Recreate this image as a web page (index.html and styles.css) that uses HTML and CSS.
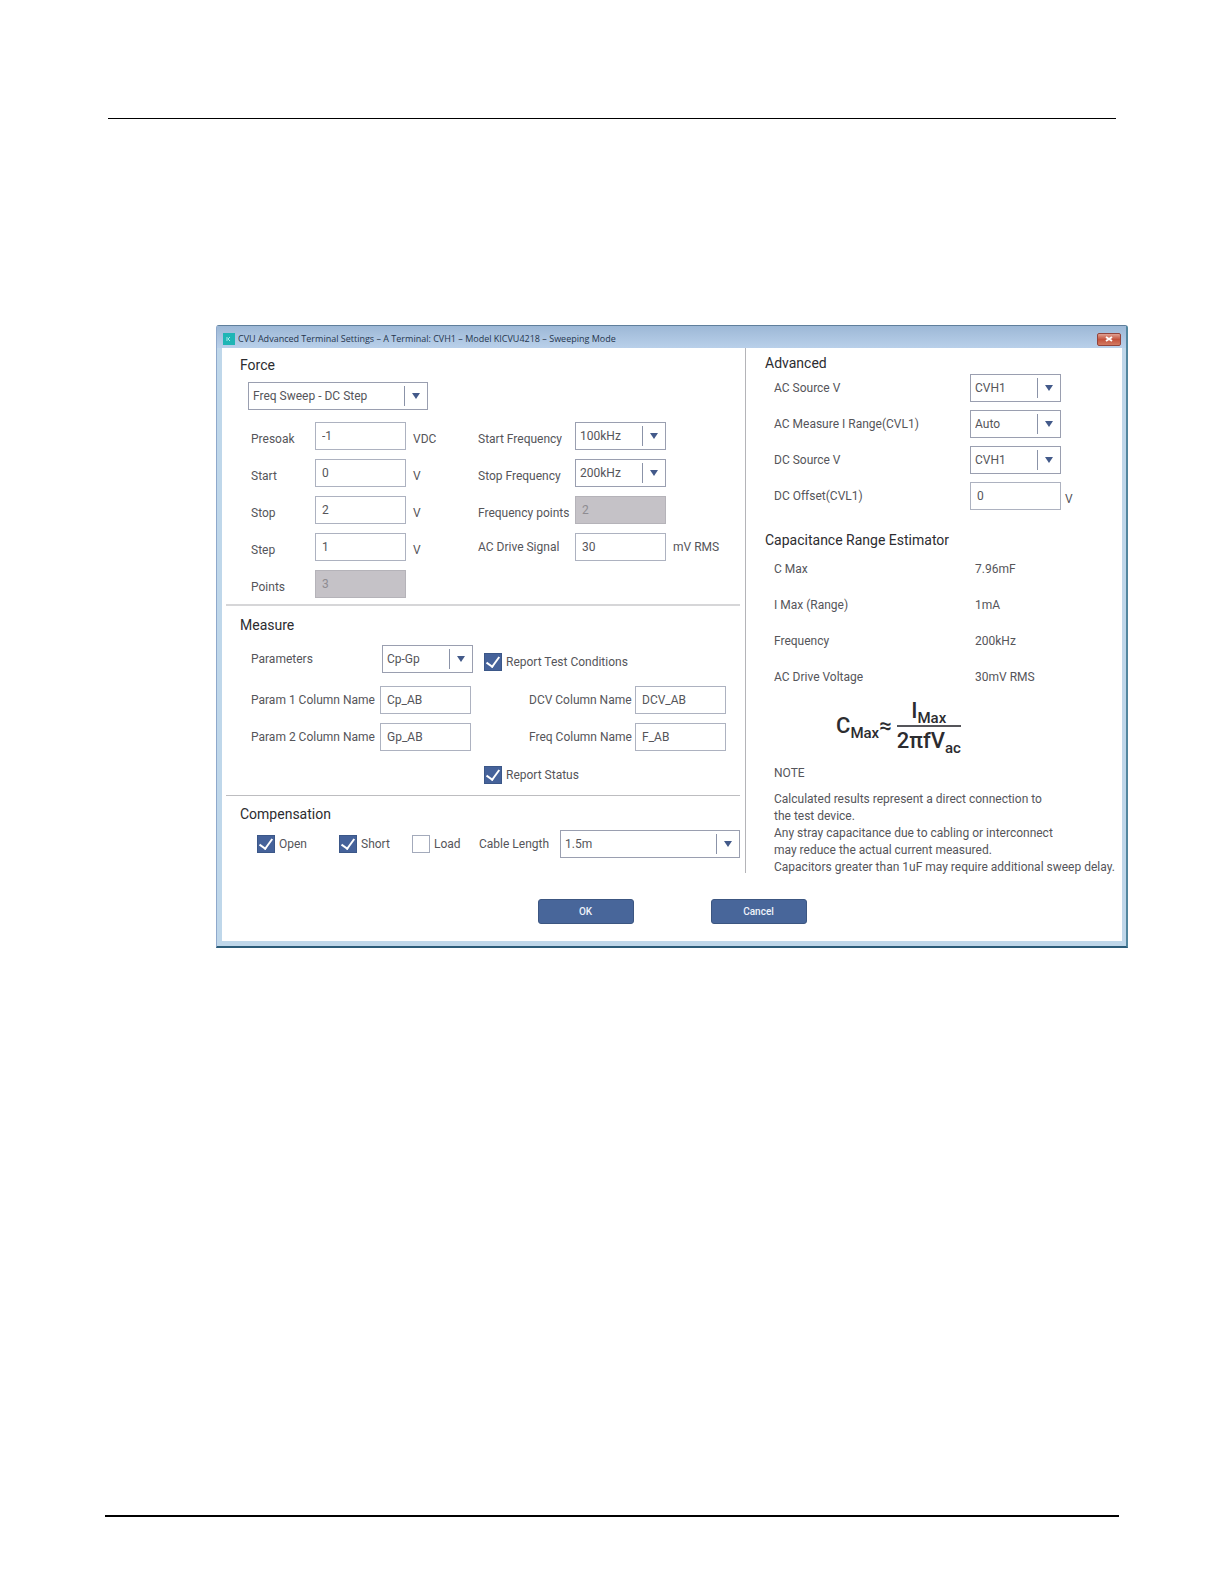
FILE: index.html
```html
<!DOCTYPE html>
<html lang="en">
<head>
<meta charset="utf-8">
<title>CVU Advanced Terminal Settings</title>
<link rel="stylesheet" href="styles.css">
</head>
<body>
<div class="page">
  <hr class="rule rule-top">
  <form class="dialog">
    <header class="titlebar">
      <svg class="app-icon" viewBox="0 0 12 12" aria-hidden="true"><rect width="12" height="12" fill="#1fb5b5"/><path d="M4 4v4M7 4L5 6l2 2" stroke="#a5ecea" fill="none"/></svg>
      <h1 class="title">CVU Advanced Terminal Settings – A Terminal: CVH1 – Model KICVU4218 – Sweeping Mode</h1>
      <button type="button" class="close" aria-label="Close"><svg viewBox="0 0 8 6" aria-hidden="true"><path d="M1 1l6 4M7 1L1 5" stroke="#fff" stroke-width="2"/></svg></button>
    </header>
    <div class="body">
      <div class="left">
        <section class="force">
          <h2>Force</h2>
          <span class="select wide"><select aria-label="Force mode"><option>Freq Sweep - DC Step</option></select></span>
          <div class="force-grid">
            <label for="presoak">Presoak</label><input id="presoak" value="-1"><span class="unit">VDC</span>
            <label for="f1">Start Frequency</label><span class="select"><select id="f1"><option>100kHz</option></select></span><span></span>
            <label for="start">Start</label><input id="start" value="0"><span class="unit">V</span>
            <label for="f2">Stop Frequency</label><span class="select"><select id="f2"><option>200kHz</option></select></span><span></span>
            <label for="stop">Stop</label><input id="stop" value="2"><span class="unit">V</span>
            <label for="fp">Frequency points</label><input id="fp" value="2" disabled><span></span>
            <label for="step">Step</label><input id="step" value="1"><span class="unit">V</span>
            <label class="level" for="ac">AC Drive Signal</label><input id="ac" value="30"><span class="unit level">mV RMS</span>
            <label for="points">Points</label><input id="points" value="3" disabled>
          </div>
        </section>
        <section class="measure">
          <h2>Measure</h2>
          <div class="measure-grid params">
            <label for="params">Parameters</label><span class="select"><select id="params"><option>Cp-Gp</option></select></span>
            <label class="check report"><input type="checkbox" checked>Report Test Conditions</label>
          </div>
          <div class="measure-grid names">
            <label for="p1">Param 1 Column Name</label><input id="p1" value="Cp_AB">
            <label class="second" for="dcv">DCV Column Name</label><input id="dcv" value="DCV_AB">
            <label for="p2">Param 2 Column Name</label><input id="p2" value="Gp_AB">
            <label class="second" for="freq">Freq Column Name</label><input id="freq" value="F_AB">
          </div>
          <div class="measure-grid status">
            <label class="check report"><input type="checkbox" checked>Report Status</label>
          </div>
        </section>
        <section class="compensation">
          <h2>Compensation</h2>
          <div class="comp-grid">
            <label class="check"><input type="checkbox" checked>Open</label>
            <label class="check"><input type="checkbox" checked>Short</label>
            <label class="check"><input type="checkbox">Load</label>
            <label for="cable">Cable Length</label>
            <span class="select"><select id="cable"><option>1.5m</option></select></span>
          </div>
        </section>
      </div>
      <div class="right">
        <section>
          <h2>Advanced</h2>
          <div class="adv-grid">
            <label for="acs">AC Source V</label><span class="select"><select id="acs"><option>CVH1</option></select></span><span></span>
            <label for="acm">AC Measure I Range(CVL1)</label><span class="select"><select id="acm"><option>Auto</option></select></span><span></span>
            <label for="dcs">DC Source V</label><span class="select"><select id="dcs"><option>CVH1</option></select></span><span></span>
            <label for="dco">DC Offset(CVL1)</label><input id="dco" value="0"><span class="unit">V</span>
          </div>
        </section>
        <section class="estimator">
          <h2>Capacitance Range Estimator</h2>
          <dl>
            <dt>C Max</dt><dd>7.96mF</dd>
            <dt>I Max (Range)</dt><dd>1mA</dd>
            <dt>Frequency</dt><dd>200kHz</dd>
            <dt>AC Drive Voltage</dt><dd>30mV RMS</dd>
          </dl>
          <div class="formula">
            <span>C<sub>Max</sub>≈</span>
            <span class="fraction"><span class="num">I<sub>Max</sub></span><span class="den">2πfV<sub>ac</sub></span></span>
          </div>
          <h3>NOTE</h3>
          <p>Calculated results represent a direct connection to<br>the test device.<br>Any stray capacitance due to cabling or interconnect<br>may reduce the actual current measured.<br>Capacitors greater than 1uF may require additional sweep delay.</p>
        </section>
      </div>
    </div>
    <footer class="actions">
      <button type="button">OK</button>
      <button type="button">Cancel</button>
    </footer>
  </form>
  <hr class="rule rule-bottom">
</div>
</body>
</html>
```
FILE: styles.css
```css
* { box-sizing: border-box; }

body {
  margin: 0;
  background: #fff;
  color: #55555a;
  font: 12px/18px Roboto, "Liberation Sans", sans-serif;
}

.page {
  display: flex;
  flex-direction: column;
  min-height: 100vh;
  padding: 118px 96px 67px 105px;
}

.rule { width: auto; margin: 0; border: 0; background: #000; }
.rule-top { height: 1px; margin: 0 12px 206px 3px; }
.rule-bottom { height: 2px; margin: auto 9px 0 0; }

.dialog {
  margin-left: 111px;
  border: solid #52869f;
  border-width: 1px 2px 2px 1px;
  border-top-color: #5f7f9c;
  border-left-color: #8fa9cc;
  border-bottom-color: #2b5b78;
  border-radius: 3px 3px 0 0;
  background: #bfd7ea;
  padding: 0 4px 5px 5px;
}

.titlebar {
  display: flex;
  align-items: center;
  gap: 3px;
  height: 22px;
  margin: 0 -4px 0 -5px;
  padding: 4px 5px 0 6px;
  background: linear-gradient(#9db8d6, #b9d0ea);
}
.app-icon { width: 12px; height: 12px; }
.title {
  flex: 1;
  margin: 0;
  color: #26364e;
  font: 9px/14px "Open Sans", "Noto Sans", sans-serif;
}
.close {
  display: flex;
  align-items: center;
  justify-content: center;
  width: 24px;
  height: 13px;
  padding: 0;
  border: 1px solid #93443c;
  border-radius: 2px;
  background: linear-gradient(#e0a192, #c4523c 50%, #d27a62);
}
.close svg { width: 8px; height: 6px; }

.body {
  display: grid;
  grid-template-columns: minmax(0, 524fr) minmax(0, 376fr);
  align-items: start;
  background: #fff;
}

.left {
  min-height: 525px;
  padding: 8px 5px 0 4px;
  border-right: 1px solid #b4b4b8;
}

h2 {
  margin: 0;
  color: #2c2c30;
  font-size: 14px;
  font-weight: 400;
  line-height: 18px;
}
.left h2 { padding-left: 14px; }

.force { padding-bottom: 6px; border-bottom: 2px solid #d6d6d8; }
.measure { padding: 10px 0 11px; border-bottom: 1px solid #bdbdc0; }
.compensation { padding-top: 9px; }

input:not([type="checkbox"]), select {
  width: 100%;
  height: 28px;
  margin: 0;
  padding: 0 6px;
  border: 1px solid #adb2c0;
  border-radius: 0;
  background: #fff;
  color: #55555a;
  font: inherit;
}
input:disabled:not([type="checkbox"]) {
  border-color: #b5b3b9;
  background: #c5c2c7;
  color: #8e8c92;
}

.select { position: relative; display: block; }
.select select {
  appearance: none;
  padding: 0 24px 0 4px;
  border-color: #9a9fb0;
  background: linear-gradient(#8b93a8, #8b93a8) right 22px center / 1px 20px no-repeat #fff;
}
.select::after {
  content: "";
  position: absolute;
  top: 11px;
  right: 8px;
  border: solid transparent;
  border-width: 6px 4px 0;
  border-top-color: #435a8a;
  pointer-events: none;
}
.wide { width: 180px; margin: 8px 0 12px 22px; }

.force-grid {
  display: grid;
  grid-template-columns: 64px 91px 72px 97px 91px 1fr;
  grid-auto-rows: 28px;
  row-gap: 9px;
  padding-left: 25px;
}
.force-grid label, .unit { padding-top: 8px; }
.unit { padding-left: 7px; }
.adv-grid .unit { padding-left: 4px; }
.force-grid .level { padding-top: 5px; }

.measure-grid {
  display: grid;
  grid-template-columns: 129px 91px 164px 91px;
  grid-auto-rows: 28px;
  align-items: center;
  row-gap: 9px;
  margin-top: 11px;
  padding-left: 25px;
}
.params { grid-template-columns: 131px 91px 1fr; }
.params .report { padding: 6px 0 0 11px; }
.names { margin-top: 13px; }
.second { padding-left: 58px; }
.status { grid-auto-rows: 18px; margin-top: 15px; }

.check { display: flex; align-items: center; gap: 4px; }
.report { grid-column: 3 / -1; padding-left: 13px; }
.check input {
  appearance: none;
  display: grid;
  place-items: center;
  width: 18px;
  height: 18px;
  margin: 0;
  border: 1px solid #a3aabb;
  background: #fff;
}
.check input:checked { border-color: #3b5788; background: #45629a; }
.check input:checked::before {
  content: "";
  width: 6px;
  height: 11px;
  margin-bottom: 3px;
  border: solid #fff;
  border-width: 0 2px 2px 0;
  transform: rotate(36deg);
}

.comp-grid {
  display: grid;
  grid-template-columns: 82px 73px 67px 81px minmax(0, 1fr);
  align-items: center;
  margin-top: 7px;
  padding-left: 31px;
}

.right { padding: 6px 0 0 28px; }
.right h2 { margin-left: -9px; }
.adv-grid {
  display: grid;
  grid-template-columns: 196px 91px 1fr;
  grid-auto-rows: 28px;
  row-gap: 8px;
  margin-top: 2px;
}
.adv-grid label { padding-top: 5px; }

.estimator { padding-top: 21px; }
dl {
  display: grid;
  grid-template-columns: 201px 1fr;
  grid-auto-rows: 36px;
  align-items: center;
  margin: 2px 0 0;
}
dd { margin: 0; }

.formula {
  display: flex;
  align-items: center;
  gap: 5px;
  height: 62px;
  padding-left: 62px;
  color: #2c2c30;
  font-size: 22px;
  font-weight: 500;
  line-height: 28px;
}
.formula sub { font-size: 15px; line-height: 0; vertical-align: -5px; }
.fraction { display: flex; flex-direction: column; text-align: center; }
.num { border-bottom: 2px solid #55555a; }

h3 { margin: 8px 0 0; font-size: 12px; font-weight: 400; line-height: 17px; }
.right p { margin: 9px 0 0; line-height: 17px; white-space: nowrap; }

.actions {
  display: flex;
  justify-content: center;
  gap: 77px;
  padding: 23px 0 17px;
  background: #fff;
}
.actions button {
  width: 96px;
  height: 25px;
  padding: 0;
  border: 1px solid #3c5681;
  border-radius: 3px;
  background: #48669a;
  color: #eef2fa;
  font: 500 10px/12px Roboto, sans-serif;
}
```
